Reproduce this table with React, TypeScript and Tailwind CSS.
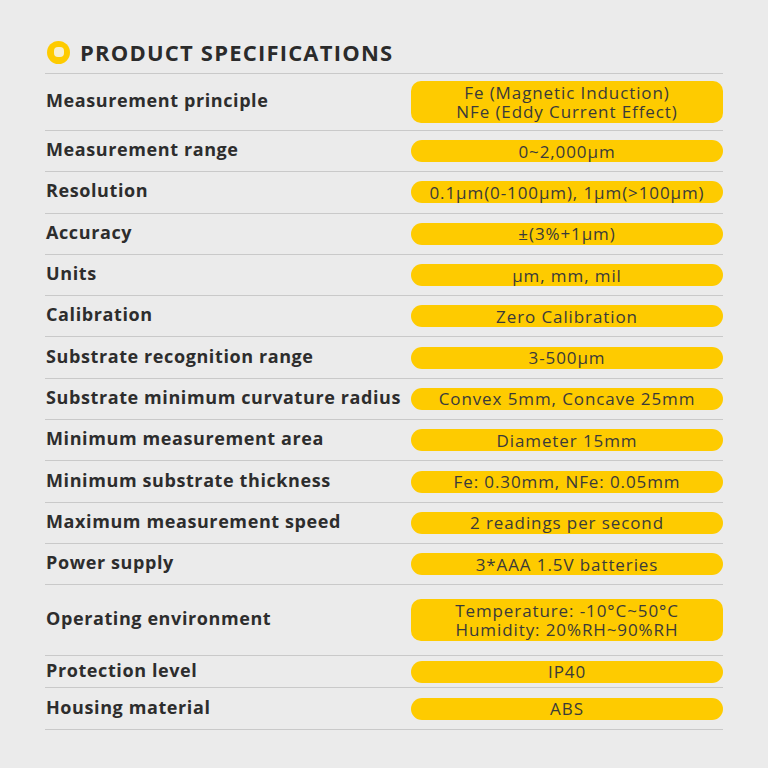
import React from "react";

type Spec = { label: string; value: string[]; h: string };

const specs: Spec[] = [
  { label: "Measurement principle", value: ["Fe (Magnetic Induction)", "NFe (Eddy Current Effect)"], h: "h-[57px]" },
  { label: "Measurement range", value: ["0~2,000μm"], h: "h-[41.3px]" },
  { label: "Resolution", value: ["0.1μm(0-100μm), 1μm(>100μm)"], h: "h-[41.3px]" },
  { label: "Accuracy", value: ["±(3%+1μm)"], h: "h-[41.3px]" },
  { label: "Units", value: ["μm, mm, mil"], h: "h-[41.3px]" },
  { label: "Calibration", value: ["Zero Calibration"], h: "h-[41.3px]" },
  { label: "Substrate recognition range", value: ["3-500μm"], h: "h-[41.3px]" },
  { label: "Substrate minimum curvature radius", value: ["Convex 5mm, Concave 25mm"], h: "h-[41.3px]" },
  { label: "Minimum measurement area", value: ["Diameter 15mm"], h: "h-[41.3px]" },
  { label: "Minimum substrate thickness", value: ["Fe: 0.30mm, NFe: 0.05mm"], h: "h-[41.3px]" },
  { label: "Maximum measurement speed", value: ["2 readings per second"], h: "h-[41.3px]" },
  { label: "Power supply", value: ["3*AAA 1.5V batteries"], h: "h-[41.3px]" },
  { label: "Operating environment", value: ["Temperature: -10°C~50°C", "Humidity: 20%RH~90%RH"], h: "h-[71px]" },
  { label: "Protection level", value: ["IP40"], h: "h-[32px]" },
  { label: "Housing material", value: ["ABS"], h: "h-[42px]" },
];

const SpecRow = ({ spec }: { spec: Spec }) => {
  const multi = spec.value.length > 1;
  return (
    <div className={`flex items-center justify-between border-b border-[#c9c9c9] ${spec.h}`}>
      <span className="pb-[3px] pl-px text-[18px] font-bold tracking-[0.6px] text-[#2d2d2d]">{spec.label}</span>
      <div
        className={`flex w-[312px] flex-col items-center justify-center bg-[#fecb00] text-[17px] tracking-[0.9px] text-[#3a3a3a] ${
          multi ? "h-[42px] rounded-[10px]" : "h-[22px] rounded-full"
        }`}
      >
        {spec.value.map((v) => (
          <span key={v} className="block h-[19px] leading-[19px]">
            {v}
          </span>
        ))}
      </div>
    </div>
  );
};

export default function App() {
  return (
    <div className="min-h-[768px] w-[768px] bg-[#ebebeb] font-['Open_Sans',sans-serif]">
      <div className="pl-[45px] pr-[45px] pt-[40px]">
        <div className="flex h-[24px] items-center gap-[10px] pl-[2px]">
          <div className="flex h-[23px] w-[23px] items-center justify-center rounded-full bg-[#fecb00]">
            <div className="h-[10px] w-[10px] rounded-[4px] bg-[#f6efd2]" />
          </div>
          <h1 className="text-[22px] font-bold tracking-[1.2px] text-[#2b2b2b]">PRODUCT SPECIFICATIONS</h1>
        </div>
        <div className="mt-[9px] border-t border-[#c9c9c9]">
          {specs.map((s) => (
            <SpecRow key={s.label} spec={s} />
          ))}
        </div>
      </div>
    </div>
  );
}
